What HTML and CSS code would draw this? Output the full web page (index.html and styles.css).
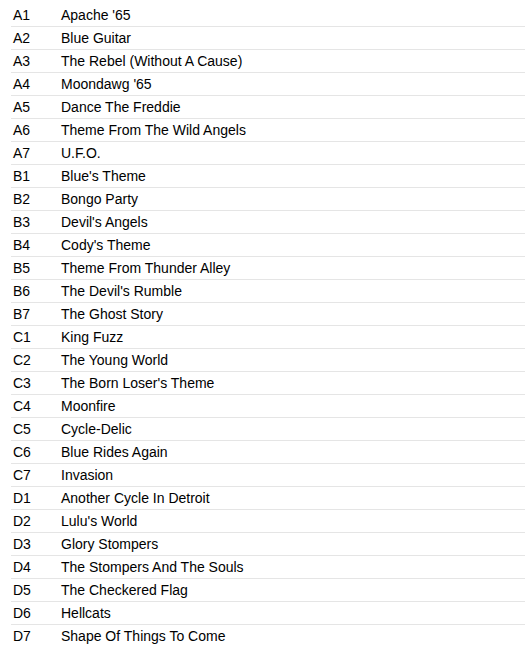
FILE: index.html
```html
<!DOCTYPE html>
<html>
<head>
<meta charset="utf-8">
<link rel="stylesheet" href="styles.css">
</head>
<body>
<ol class="tracklist">
<li class="track"><span class="pos">A1</span><span class="title">Apache '65</span></li>
<li class="track"><span class="pos">A2</span><span class="title">Blue Guitar</span></li>
<li class="track"><span class="pos">A3</span><span class="title">The Rebel (Without A Cause)</span></li>
<li class="track"><span class="pos">A4</span><span class="title">Moondawg '65</span></li>
<li class="track"><span class="pos">A5</span><span class="title">Dance The Freddie</span></li>
<li class="track"><span class="pos">A6</span><span class="title">Theme From The Wild Angels</span></li>
<li class="track"><span class="pos">A7</span><span class="title">U.F.O.</span></li>
<li class="track"><span class="pos">B1</span><span class="title">Blue's Theme</span></li>
<li class="track"><span class="pos">B2</span><span class="title">Bongo Party</span></li>
<li class="track"><span class="pos">B3</span><span class="title">Devil's Angels</span></li>
<li class="track"><span class="pos">B4</span><span class="title">Cody's Theme</span></li>
<li class="track"><span class="pos">B5</span><span class="title">Theme From Thunder Alley</span></li>
<li class="track"><span class="pos">B6</span><span class="title">The Devil's Rumble</span></li>
<li class="track"><span class="pos">B7</span><span class="title">The Ghost Story</span></li>
<li class="track"><span class="pos">C1</span><span class="title">King Fuzz</span></li>
<li class="track"><span class="pos">C2</span><span class="title">The Young World</span></li>
<li class="track"><span class="pos">C3</span><span class="title">The Born Loser's Theme</span></li>
<li class="track"><span class="pos">C4</span><span class="title">Moonfire</span></li>
<li class="track"><span class="pos">C5</span><span class="title">Cycle-Delic</span></li>
<li class="track"><span class="pos">C6</span><span class="title">Blue Rides Again</span></li>
<li class="track"><span class="pos">C7</span><span class="title">Invasion</span></li>
<li class="track"><span class="pos">D1</span><span class="title">Another Cycle In Detroit</span></li>
<li class="track"><span class="pos">D2</span><span class="title">Lulu's World</span></li>
<li class="track"><span class="pos">D3</span><span class="title">Glory Stompers</span></li>
<li class="track"><span class="pos">D4</span><span class="title">The Stompers And The Souls</span></li>
<li class="track"><span class="pos">D5</span><span class="title">The Checkered Flag</span></li>
<li class="track"><span class="pos">D6</span><span class="title">Hellcats</span></li>
<li class="track"><span class="pos">D7</span><span class="title">Shape Of Things To Come</span></li>
</ol>
</body>
</html>
```
FILE: styles.css
```css
html, body {
  margin: 0;
  padding: 0;
  background: #fff;
}
body {
  font-family: "Liberation Sans", Arial, sans-serif;
  font-size: 14px;
  color: #000;
}
.tracklist {
  list-style: none;
  margin: 4px 0 0 11px;
  padding: 0;
}
.track {
  display: flex;
  height: 22px;
  line-height: 22px;
  border-bottom: 1px solid #e5e5e5;
}
.track:last-child {
  border-bottom: none;
}
.pos {
  width: 48px;
  padding-left: 2px;
  flex-shrink: 0;
}
.title {
  flex: 1;
}
```
